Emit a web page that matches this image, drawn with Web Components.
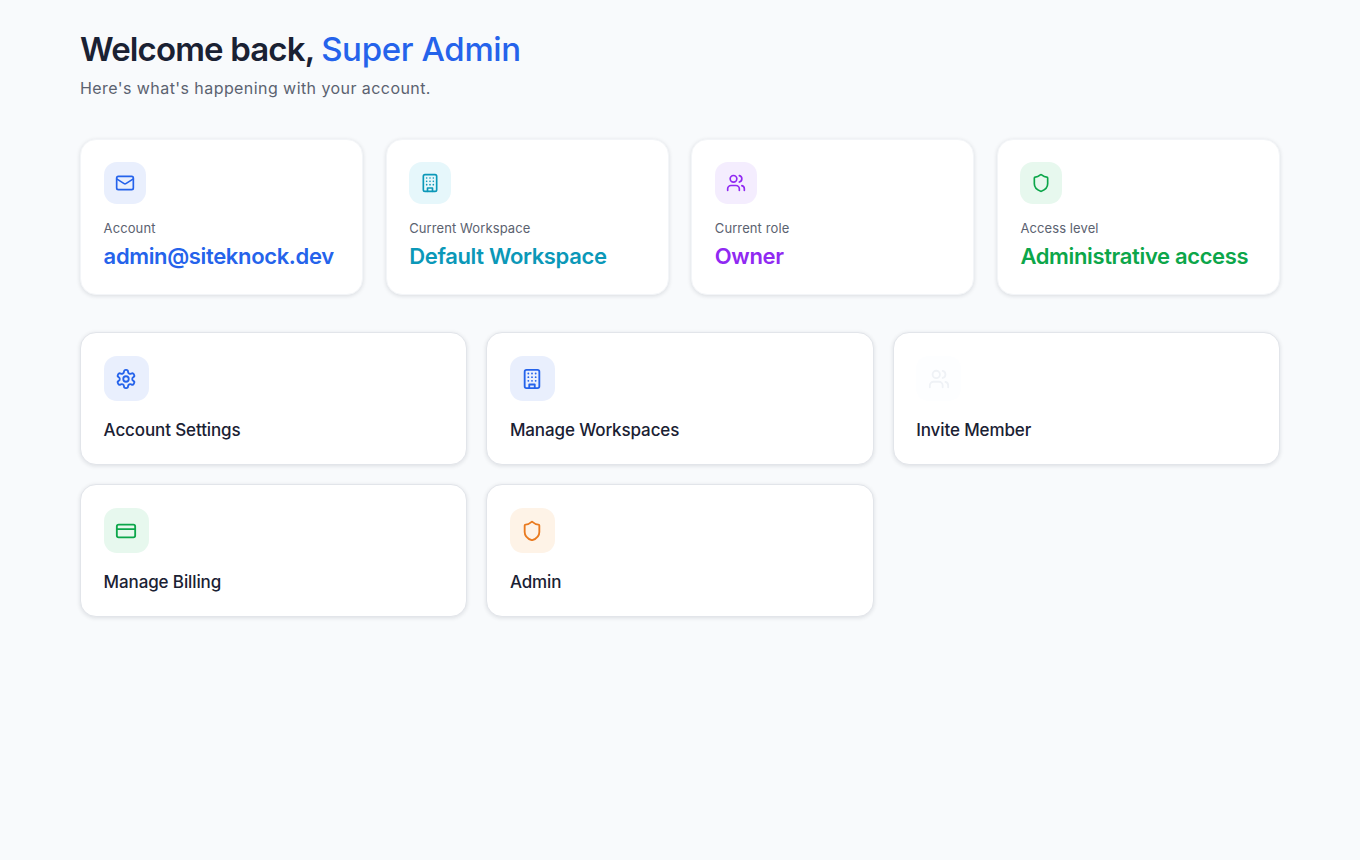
<!DOCTYPE html>
<html lang="en">
<head>
<meta charset="utf-8">
<title>Dashboard</title>
<style>
  html, body { margin: 0; background: #f8fafc; }
  body { font-family: Inter, "Liberation Sans", sans-serif; color: #1a2133; }
</style>
</head>
<body>
<dash-page>
  <span slot="greeting">Welcome back, </span>
  <span slot="name">Super Admin</span>
  <span slot="sub">Here's what's happening with your account.</span>

  <stat-card slot="stats" icon="mail" label="Account" value="admin@siteknock.dev" color="#2563eb" tint="#e9effd"></stat-card>
  <stat-card slot="stats" icon="building" label="Current Workspace" value="Default Workspace" color="#0b98b8" tint="#e6f7fb"></stat-card>
  <stat-card slot="stats" icon="users" label="Current role" value="Owner" color="#9029f2" tint="#f4edfe"></stat-card>
  <stat-card slot="stats" icon="shield" label="Access level" value="Administrative access" color="#0ca64a" tint="#e7f8ee"></stat-card>

  <action-card slot="actions" icon="settings" label="Account Settings" color="#2563eb" tint="#e9effd"></action-card>
  <action-card slot="actions" icon="building" label="Manage Workspaces" color="#2563eb" tint="#e9effd"></action-card>
  <action-card slot="actions" icon="users" label="Invite Member" color="#eff2f6" tint="#fdfeff"></action-card>
  <action-card slot="actions" icon="card" label="Manage Billing" color="#0ca64a" tint="#e7f8ee"></action-card>
  <action-card slot="actions" icon="shield" label="Admin" color="#e97a1f" tint="#fef3e7"></action-card>
</dash-page>

<script>
const ICONS = {
  mail: '<path d="m22 7-8.97 5.7a1.94 1.94 0 0 1-2.06 0L2 7"/><rect x="2" y="4" width="20" height="16" rx="2"/>',
  building: '<rect x="4" y="2" width="16" height="20" rx="2"/><path d="M9 22v-4h6v4"/><path d="M8 6h.01M16 6h.01M12 6h.01M12 10h.01M12 14h.01M16 10h.01M16 14h.01M8 10h.01M8 14h.01"/>',
  users: '<path d="M16 21v-2a4 4 0 0 0-4-4H6a4 4 0 0 0-4 4v2"/><circle cx="9" cy="7" r="4"/><path d="M22 21v-2a4 4 0 0 0-3-3.87"/><path d="M16 3.13a4 4 0 0 1 0 7.75"/>',
  shield: '<path d="M20 13c0 5-3.5 7.5-7.66 8.95a1 1 0 0 1-.67-.01C7.5 20.5 4 18 4 13V6a1 1 0 0 1 1-1c2 0 4.5-1.2 6.24-2.72a1.17 1.17 0 0 1 1.52 0C14.51 3.81 17 5 19 5a1 1 0 0 1 1 1z"/>',
  settings: '<path d="M12.22 2h-.44a2 2 0 0 0-2 2v.18a2 2 0 0 1-1 1.73l-.43.25a2 2 0 0 1-2 0l-.15-.08a2 2 0 0 0-2.73.73l-.22.38a2 2 0 0 0 .73 2.73l.15.1a2 2 0 0 1 1 1.72v.51a2 2 0 0 1-1 1.74l-.15.09a2 2 0 0 0-.73 2.73l.22.38a2 2 0 0 0 2.73.73l.15-.08a2 2 0 0 1 2 0l.43.25a2 2 0 0 1 1 1.73V20a2 2 0 0 0 2 2h.44a2 2 0 0 0 2-2v-.18a2 2 0 0 1 1-1.73l.43-.25a2 2 0 0 1 2 0l.15.08a2 2 0 0 0 2.73-.73l.22-.39a2 2 0 0 0-.73-2.73l-.15-.08a2 2 0 0 1-1-1.74v-.5a2 2 0 0 1 1-1.74l.15-.09a2 2 0 0 0 .73-2.73l-.22-.38a2 2 0 0 0-2.73-.73l-.15.08a2 2 0 0 1-2 0l-.43-.25a2 2 0 0 1-1-1.73V4a2 2 0 0 0-2-2z"/><circle cx="12" cy="12" r="3"/>',
  card: '<rect x="2" y="5" width="20" height="14" rx="2"/><line x1="2" y1="10" x2="22" y2="10"/>'
};

class IconTile extends HTMLElement {
  connectedCallback() {
    const size = this.getAttribute("size") || 42;
    const glyph = this.getAttribute("glyph") || 20;
    this.attachShadow({ mode: "open" }).innerHTML = `
      <style>
        :host { display: flex; align-items: center; justify-content: center; width: ${size}px; height: ${size}px; border-radius: 13px; background: ${this.getAttribute("tint")}; color: ${this.getAttribute("color")}; }
        svg { display: block; fill: none; stroke: currentColor; stroke-width: 2; stroke-linecap: round; stroke-linejoin: round; }
      </style>
      <svg width="${glyph}" height="${glyph}" viewBox="0 0 24 24">${ICONS[this.getAttribute("icon")]}</svg>`;
  }
}
customElements.define("icon-tile", IconTile);

class StatCard extends HTMLElement {
  connectedCallback() {
    const a = (n) => this.getAttribute(n);
    this.attachShadow({ mode: "open" }).innerHTML = `
      <style>
        :host { display: block; box-sizing: border-box; height: 156px; padding: 22px 22.6px; background: #fff; border: 1px solid #f3f5f8; border-radius: 16px; box-shadow: 0 1px 4px rgba(15,23,42,.13); }
        .label { margin-top: 15px; font: 400 13px/18px Inter, sans-serif; letter-spacing: .1px; color: #5b6270; }
        .value { margin-top: 4px; font: 600 22px/30px Inter, sans-serif; letter-spacing: -.35px; color: ${a("color")}; white-space: nowrap; }
      </style>
      <icon-tile icon="${a("icon")}" color="${a("color")}" tint="${a("tint")}" size="42" glyph="20"></icon-tile>
      <div class="label">${a("label")}</div>
      <div class="value">${a("value")}</div>`;
  }
}
customElements.define("stat-card", StatCard);

class ActionCard extends HTMLElement {
  connectedCallback() {
    const a = (n) => this.getAttribute(n);
    this.attachShadow({ mode: "open" }).innerHTML = `
      <style>
        :host { display: block; box-sizing: border-box; height: 133px; padding: 23px 22.6px; background: #fff; border: 1px solid #e2e5ea; border-radius: 16px; box-shadow: 0 1px 4px rgba(15,23,42,.12); }
        .label { margin-top: 17px; font: 500 17px/24px Inter, sans-serif; letter-spacing: -.12px; color: #1a2133; }
      </style>
      <icon-tile icon="${a("icon")}" color="${a("color")}" tint="${a("tint")}" size="45" glyph="22"></icon-tile>
      <div class="label">${a("label")}</div>`;
  }
}
customElements.define("action-card", ActionCard);

class DashPage extends HTMLElement {
  constructor() {
    super();
    this.attachShadow({ mode: "open" }).innerHTML = `
      <style>
        :host { display: block; box-sizing: border-box; min-height: 860px; padding: 28px 80px 0; }
        h1 { margin: 0; font: 600 33px/42px Inter, sans-serif; letter-spacing: -.85px; color: #1a2133; }
        .name { color: #2563eb; font-weight: 500; letter-spacing: -.35px; }
        p { margin: 7px 0 0; font: 400 16px/22px Inter, sans-serif; letter-spacing: .43px; color: #5b6270; }
        .stats { display: grid; grid-template-columns: repeat(4, 1fr); gap: 22.4px; margin-top: 40px; }
        .actions { display: grid; grid-template-columns: repeat(3, 1fr); gap: 19px; margin-top: 37px; }
      </style>
      <h1><slot name="greeting"></slot><span class="name"><slot name="name"></slot></span></h1>
      <p><slot name="sub"></slot></p>
      <div class="stats"><slot name="stats"></slot></div>
      <div class="actions"><slot name="actions"></slot></div>`;
  }
}
customElements.define("dash-page", DashPage);
</script>
</body>
</html>
